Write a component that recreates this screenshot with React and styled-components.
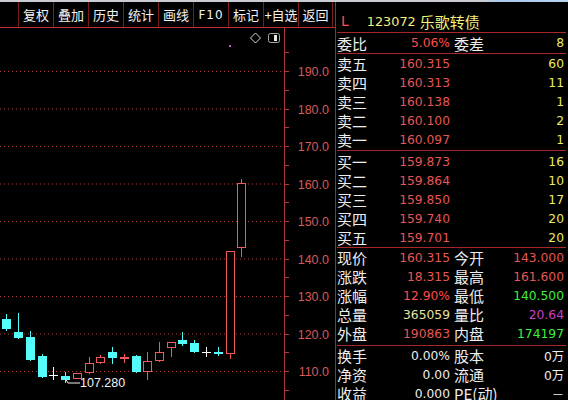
import React from "react";
import styled, { createGlobalStyle } from "styled-components";

const GlobalStyle = createGlobalStyle`
  * { box-sizing: border-box; }
  body {
    margin: 0;
    background: #000;
    font-family: "Noto Sans CJK SC", "DejaVu Sans", sans-serif;
  }
`;

const CJK = `"Noto Sans CJK SC", sans-serif`;
const NUM = `"DejaVu Sans", sans-serif`;
const LINE = "#a82828";

const Screen = styled.div`
  width: 568px;
  height: 400px;
  overflow: hidden;
  background: #000;
  display: flex;
  flex-direction: column;
`;

const TopStrip = styled.div`
  height: 2px;
  flex: none;
  background: linear-gradient(to right, #c9ccd2 0%, #c9ccd2 85%, #a9c8ea 88%, #b8d4f0 100%);
`;

const Main = styled.div`
  flex: 1;
  display: flex;
  min-height: 0;
`;

const LeftColumn = styled.div`
  width: 335px;
  flex: none;
  display: flex;
  flex-direction: column;
`;

const Toolbar = styled.div`
  height: 26px;
  flex: none;
  display: flex;
  padding-left: 18px;
  border-bottom: 1px solid #c03030;
`;

const ToolButton = styled.div`
  width: 35px;
  flex: none;
  border-left: 1px solid #7a1c1c;
  border-right: ${(p) => (p.last ? "1px solid #7a1c1c" : "none")};
  color: #f2f2f2;
  font-family: ${(p) => (p.latin ? NUM : CJK)};
  font-size: ${(p) => (p.latin ? "12px" : "13px")};
  display: flex;
  align-items: center;
  justify-content: center;
  letter-spacing: ${(p) => (p.latin ? "1px" : "0")};
  white-space: nowrap;
`;

const ChartBox = styled.div`
  flex: 1;
  svg {
    display: block;
  }
`;

const Panel = styled.div`
  flex: 1;
  border-left: 1px solid ${LINE};
  display: flex;
  flex-direction: column;
  padding-left: 1px;
  padding-right: 2px;
`;

const Header = styled.div`
  height: 31px;
  flex: none;
  border-bottom: 1px solid ${LINE};
  display: flex;
  align-items: center;
  padding-left: 4px;
  padding-top: 8px;
`;

const Code = styled.span`
  color: #f4f07a;
  font-family: ${NUM};
  font-size: 12.8px;
  margin-left: 18px;
`;

const Letter = styled.span`
  color: #ff5050;
  font-family: ${NUM};
  font-size: 14px;
`;

const Name = styled.span`
  color: #f4f07a;
  font-family: ${CJK};
  font-size: 15px;
  line-height: 19px;
  margin-left: 4px;
`;

const Section = styled.div`
  flex: none;
  border-bottom: ${(p) => (p.open ? "none" : `1px solid ${LINE}`)};
  padding-top: ${(p) => p.pt || 0}px;
  padding-bottom: ${(p) => p.pb || 0}px;
`;

const Row = styled.div`
  display: grid;
  grid-template-columns: 40px 75px 44px 1fr;
  height: ${(p) => p.h || 19}px;
  align-items: center;
`;

const Label = styled.span`
  color: #eeeeee;
  font-family: ${CJK};
  font-size: 15px;
  line-height: 19px;
  padding-left: ${(p) => (p.second ? "2px" : "0")};
  white-space: nowrap;
`;

const Value = styled.span`
  grid-column: ${(p) => p.col || "auto"};
  color: ${(p) => p.color};
  font-family: ${(p) => (p.cjk ? `"DejaVu Sans", ${CJK}` : NUM)};
  font-size: 12.3px;
  text-align: right;
  padding-right: 2px;
  white-space: nowrap;
`;

const RED = "#e65656";
const BRIGHT_RED = "#ff4c4c";
const YELLOW = "#ecec62";
const PALE_YELLOW = "#e4e4a4";
const GREEN = "#3ef03e";
const MAGENTA = "#c840c8";
const WHITE = "#f0f0f0";

const sells = [
  ["卖五", "160.315", "60"],
  ["卖四", "160.313", "11"],
  ["卖三", "160.138", "1"],
  ["卖二", "160.100", "2"],
  ["卖一", "160.097", "1"],
];

const buys = [
  ["买一", "159.873", "16"],
  ["买二", "159.864", "10"],
  ["买三", "159.850", "17"],
  ["买四", "159.740", "20"],
  ["买五", "159.701", "20"],
];

const stats = [
  ["现价", "160.315", RED, "今开", "143.000", RED],
  ["涨跌", "18.315", RED, "最高", "161.600", RED],
  ["涨幅", "12.90%", BRIGHT_RED, "最低", "140.500", GREEN],
  ["总量", "365059", PALE_YELLOW, "量比", "20.64", MAGENTA],
  ["外盘", "190863", RED, "内盘", "174197", GREEN],
];

const extra = [
  ["换手", "0.00%", "股本", "0万"],
  ["净资", "0.00", "流通", "0万"],
  ["收益", "0.000", "PE(动)", "－"],
];

const tools = ["复权", "叠加", "历史", "统计", "画线", "F10", "标记", "+自选", "返回"];

// candles in page pixels: x, body top, body bottom, wick top, wick bottom, kind
const candles = [
  [2, 319, 329, 314, 331, "down"],
  [14, 332, 338, 313, 339, "down"],
  [26, 337, 360, 331, 361, "down"],
  [38, 356, 377, 354, 378, "down"],
  [49, 375, 375, 367, 380, "flat"],
  [61, 376, 380, 372, 383, "down"],
  [73, 373, 379, 373, 379, "up"],
  [85, 363, 373, 357, 374, "up"],
  [96, 357, 363, 355, 364, "up"],
  [108, 352, 358, 347, 364, "down"],
  [120, 357, 359, 354, 363, "upflat"],
  [132, 356, 372, 355, 373, "down"],
  [143, 361, 372, 352, 380, "up"],
  [155, 352, 361, 342, 362, "up"],
  [167, 342, 348, 342, 357, "up"],
  [178, 340, 344, 332, 346, "down"],
  [190, 343, 352, 340, 353, "down"],
  [202, 352, 352, 347, 357, "flat"],
  [214, 352, 354, 347, 356, "down"],
  [226, 251, 354, 251, 359, "up"],
  [237, 183, 248, 179, 257, "up"],
];

const CANDLE_RED = "#f25a5a";
const CYAN = "#54fcfc";
const GRID = "#b03a3a";
const AXIS_TEXT = "#d65a5a";

const levels = [190, 180, 170, 160, 150, 140, 130, 120, 110];
const yOf = (p) => 371 - (p - 110) * 3.75;

function Candle({ c }) {
  const [x, bt, bb, wt, wb, kind] = c;
  const w = 9;
  const cx = x + 4.5;
  if (kind === "flat" || kind === "upflat") {
    const col = kind === "flat" ? "#ffffff" : CANDLE_RED;
    return (
      <g stroke={col} strokeWidth="1">
        <line x1={cx} y1={wt} x2={cx} y2={wb} />
        <line x1={x} y1={bt + 0.5} x2={x + w} y2={bt + 0.5} />
        {kind === "upflat" && <line x1={x} y1={bb - 0.5} x2={x + w} y2={bb - 0.5} />}
      </g>
    );
  }
  if (kind === "down") {
    return (
      <g>
        <line x1={cx} y1={wt} x2={cx} y2={wb} stroke={CYAN} strokeWidth="1" />
        <rect x={x} y={bt} width={w} height={Math.max(bb - bt, 1)} fill={CYAN} />
      </g>
    );
  }
  return (
    <g stroke={CANDLE_RED} strokeWidth="1">
      <line x1={cx} y1={wt} x2={cx} y2={bt} />
      <line x1={cx} y1={bb} x2={cx} y2={wb} />
      <rect x={x + 0.5} y={bt + 0.5} width={w - 1} height={bb - bt - 1} fill="#000" />
    </g>
  );
}

function Chart() {
  const ticks = [];
  for (let y = 52.25; y < 400; y += 18.75) ticks.push(y);
  return (
    <ChartBox>
      <svg width="335" height="372" viewBox="0 28 335 372">
        {levels.map((p) => (
          <line
            key={p}
            x1="0"
            x2="281"
            y1={yOf(p) + 0.5}
            y2={yOf(p) + 0.5}
            stroke={GRID}
            strokeWidth="1"
            strokeDasharray="1 3"
          />
        ))}
        <line x1="284.5" x2="284.5" y1="28" y2="400" stroke={GRID} strokeWidth="1" />
        {ticks.map((y) => (
          <line key={y} x1="284" x2="289" y1={Math.round(y) + 0.5} y2={Math.round(y) + 0.5} stroke={GRID} />
        ))}
        {levels.map((p) => (
          <text
            key={p}
            x="329"
            y={yOf(p) + 5}
            textAnchor="end"
            fill={AXIS_TEXT}
            fontFamily='"Liberation Sans", sans-serif'
            fontSize="12.5"
          >
            {p.toFixed(1)}
          </text>
        ))}
        {candles.map((c, i) => (
          <Candle key={i} c={c} />
        ))}
        <polyline points="65,378 68,383 80,383" fill="none" stroke="#f0f0f0" strokeWidth="1" />
        <text x="80" y="387" fill="#f4f4f4" fontFamily='"Liberation Sans", sans-serif' fontSize="12.5">
          107.280
        </text>
        <rect x="229" y="45" width="2" height="2" fill="#e040e0" />
        <path d="M255.5 33 L260.5 38 L255.5 43 L250.5 38 Z" fill="none" stroke="#d8d8d8" strokeWidth="1" />
        <rect x="268.5" y="33.5" width="11" height="9" rx="2" fill="none" stroke="#a8a8a8" />
        <rect x="274" y="35" width="3" height="6" fill="#e8e8e8" />
      </svg>
    </ChartBox>
  );
}

export default function App() {
  return (
    <>
      <GlobalStyle />
      <Screen>
        <TopStrip />
        <Main>
          <LeftColumn>
            <Toolbar>
              {tools.map((t, i) => (
                <ToolButton key={t} latin={t === "F10"} last={i === tools.length - 1}>
                  {t}
                </ToolButton>
              ))}
            </Toolbar>
            <Chart />
          </LeftColumn>
          <Panel>
            <Header>
              <Letter>L</Letter>
              <Code>123072</Code>
              <Name>乐歌转债</Name>
            </Header>
            <Section>
              <Row h={20}>
                <Label>委比</Label>
                <Value color={BRIGHT_RED}>5.06%</Value>
                <Label second>委差</Label>
                <Value color={YELLOW}>8</Value>
              </Row>
            </Section>
            <Section pb={1}>
              {sells.map(([l, p, v]) => (
                <Row key={l}>
                  <Label>{l}</Label>
                  <Value color={RED}>{p}</Value>
                  <Value col="3 / 5" color={YELLOW}>
                    {v}
                  </Value>
                </Row>
              ))}
            </Section>
            <Section pt={1}>
              {buys.map(([l, p, v]) => (
                <Row key={l}>
                  <Label>{l}</Label>
                  <Value color={RED}>{p}</Value>
                  <Value col="3 / 5" color={YELLOW}>
                    {v}
                  </Value>
                </Row>
              ))}
            </Section>
            <Section pb={2}>
              {stats.map(([l1, v1, c1, l2, v2, c2]) => (
                <Row key={l1}>
                  <Label>{l1}</Label>
                  <Value color={c1}>{v1}</Value>
                  <Label second>{l2}</Label>
                  <Value color={c2}>{v2}</Value>
                </Row>
              ))}
            </Section>
            <Section open>
              {extra.map(([l1, v1, l2, v2]) => (
                <Row key={l1}>
                  <Label>{l1}</Label>
                  <Value color={WHITE}>{v1}</Value>
                  <Label second>{l2}</Label>
                  <Value color={WHITE} cjk>
                    {v2}
                  </Value>
                </Row>
              ))}
            </Section>
          </Panel>
        </Main>
      </Screen>
    </>
  );
}
